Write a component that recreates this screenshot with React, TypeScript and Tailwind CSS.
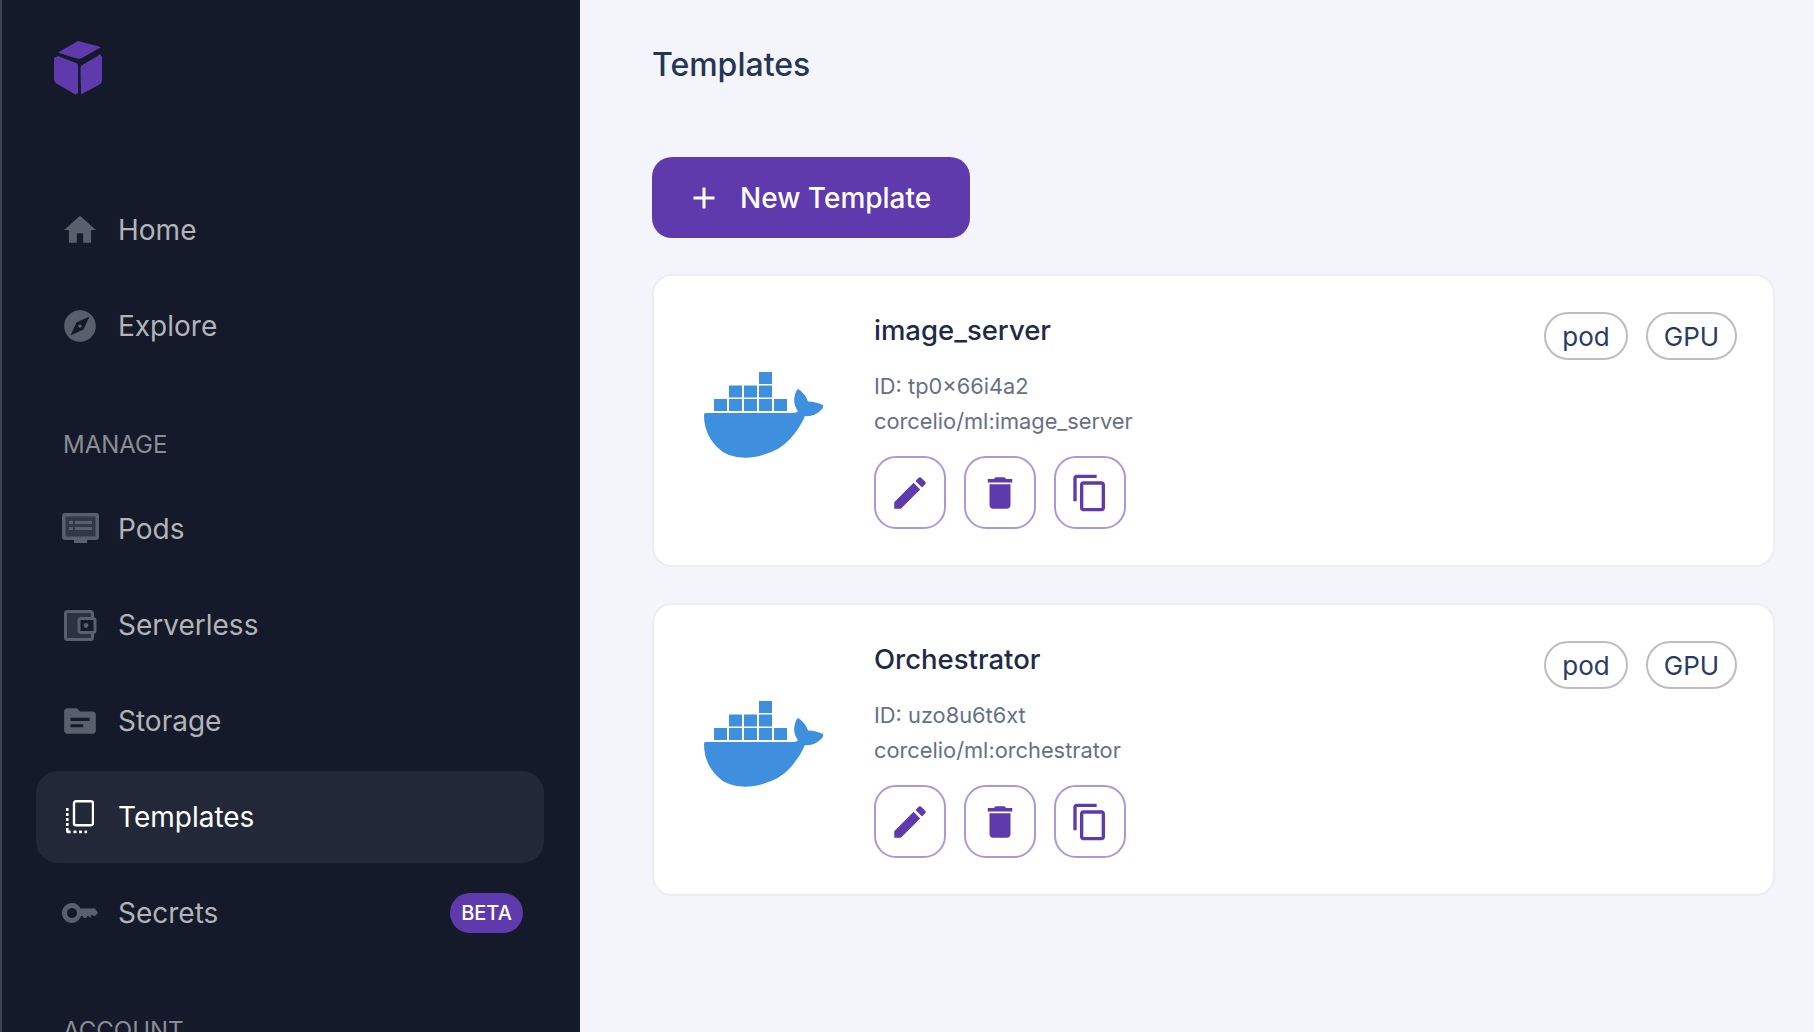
import React from 'react';
import { MdHome, MdExplore, MdTopic, MdEdit, MdDelete, MdContentCopy, MdAdd } from 'react-icons/md';

const CubeLogo = () => (
  <svg width="50" height="54" viewBox="0 0 50 54" fill="#5f3aad">
    <path d="M24 0 L45 5.5 L46.5 6.5 L28 17 Q25 18.5 21 17 L4 11.5 Z" />
    <path d="M0 17 L4 15 L22 22 Q24.5 23 24 26 L24 52 L21.5 53.5 L1.5 42 L0 39 Z" />
    <path d="M29 23.5 L42 16 L46 13 L48 16 L48 40 L46.5 43 L27 53.5 L26.5 27 Q26.5 24.5 29 23.5 Z" />
  </svg>
);

const PodsIcon = () => (
  <svg width="38" height="32" viewBox="0 0 38 32">
    <path d="M3 0 H35 Q37 0 37 3 V24 Q37 27 34 27 H25 V30 H12 V27 H3 Q0 27 0 24 V3 Q0 0 3 0 Z" fill="#5a5f6d" />
    <rect x="3.5" y="3.5" width="30" height="20" fill="#323747" />
    <rect x="7" y="8" width="4" height="3" fill="#5a5f6d" />
    <rect x="7" y="14" width="4" height="3" fill="#5a5f6d" />
    <rect x="13" y="8" width="17" height="3" fill="#5a5f6d" />
    <rect x="13" y="14" width="17" height="3" fill="#5a5f6d" />
  </svg>
);

const WalletIcon = () => (
  <svg width="33" height="31" viewBox="0 0 33 31">
    <rect x="1.5" y="1.5" width="27" height="28" rx="2" fill="#2d3242" stroke="#5a5f6d" strokeWidth="3" />
    <rect x="15" y="8.5" width="16" height="14" rx="2" fill="#141a29" stroke="#5a5f6d" strokeWidth="3" />
    <circle cx="22" cy="15.5" r="2.4" fill="#5a5f6d" />
  </svg>
);

const TemplatesIcon = () => (
  <svg width="28" height="34" viewBox="0 0 28 34" fill="#ffffff">
    <rect x="8" y="1.2" width="19" height="24" rx="2" fill="none" stroke="#ffffff" strokeWidth="2.4" />
    <rect x="0" y="8" width="2.6" height="3" />
    <rect x="0" y="13" width="2.6" height="3" />
    <rect x="0" y="18" width="2.6" height="3" />
    <rect x="0" y="23" width="2.6" height="3" />
    <path d="M0 28 H2.6 V30.6 H4.5 V33.2 H2 Q0 33.2 0 31 Z" />
    <rect x="7.5" y="30.6" width="3" height="2.6" />
    <rect x="13" y="30.6" width="3" height="2.6" />
    <rect x="18.5" y="30.6" width="2.6" height="2.6" />
  </svg>
);

const KeyIcon = () => (
  <svg width="36" height="20" viewBox="0 0 36 20" fill="#5a5f6d">
    <path fillRule="evenodd" d="M10 0 C14 0 17 2 18.4 5.5 H33 L36 10 L33 13 H31.5 L30 11.5 L28 15 L26 12.5 L24 15 H22 L20.5 13 H19 C17.5 17 14 20 10 20 C4.5 20 0 15.5 0 10 C0 4.5 4.5 0 10 0 Z M10 5 C7.2 5 5 7.2 5 10 C5 12.8 7.2 15 10 15 C12.8 15 15 12.8 15 10 C15 7.2 12.8 5 10 5 Z" />
  </svg>
);

const DockerLogo = () => (
  <svg width="121" height="87" viewBox="0 0 121 87" fill="#3e8fdd">
    <rect x="55" y="0" width="13" height="12" />
    <rect x="25" y="13.5" width="13" height="12" />
    <rect x="40" y="13.5" width="13" height="12" />
    <rect x="55" y="13.5" width="13" height="12" />
    <rect x="10" y="27" width="13" height="12" />
    <rect x="25" y="27" width="13" height="12" />
    <rect x="40" y="27" width="13" height="12" />
    <rect x="55" y="27" width="13" height="12" />
    <rect x="70" y="27" width="13" height="12" />
    <path d="M1.5 41 H88 Q92 41 94 39.5 Q89 32 90.5 25 Q91.5 19 94 17 Q101 21 104 29.5 Q110 29 119 33 Q120 36 116 39 Q110 45 101 44 Q96 56 86 67 Q73 82 46 85.5 Q24 87 13 75 Q0 62 0 43 Q0 41 1.5 41 Z" />
  </svg>
);

function NavItem({ icon, label, active, badge }: { icon: React.ReactNode; label: string; active?: boolean; badge?: string }) {
  return (
    <div className={`flex h-[92px] items-center rounded-[22px] pl-[25px] pr-[21px] ${active ? 'bg-[#222838] text-white' : 'text-[#b2b4ba]'}`}>
      <span className="flex w-[38px] justify-center">{icon}</span>
      <span className="ml-[19px] text-[28px] font-normal">{label}</span>
      {badge && (
        <span className="ml-auto flex h-10 w-[73px] items-center justify-center rounded-full bg-[#5f3aad] text-xl font-medium text-white">{badge}</span>
      )}
    </div>
  );
}

function TemplateCard({ name, id, image }: { name: string; id: string; image: string }) {
  return (
    <div className="flex h-[293px] rounded-[20px] border-2 border-[#eceef3] bg-white">
      <div className="ml-[50px] mt-[96px] w-[121px] shrink-0">
        <DockerLogo />
      </div>
      <div className="ml-[49px] pt-[34px]">
        <h2 className="text-[27.5px] leading-[40px] font-medium text-[#1e2a47]">{name}</h2>
        <p className="mt-[19px] text-[21.8px] leading-[35px] text-[#667085]">ID: {id}</p>
        <p className="text-[21.8px] leading-[35px] text-[#667085]">{image}</p>
        <div className="mt-[17px] flex gap-[18px]">
          <button className="flex h-[73px] w-[72px] items-center justify-center rounded-[22px] border-2 border-[#ae97d9] text-[#5f3aad]">
            <MdEdit size={42} />
          </button>
          <button className="flex h-[73px] w-[72px] items-center justify-center rounded-[22px] border-2 border-[#ae97d9] text-[#5f3aad]">
            <MdDelete size={42} />
          </button>
          <button className="flex h-[73px] w-[72px] items-center justify-center rounded-[22px] border-2 border-[#ae97d9] text-[#5f3aad]">
            <MdContentCopy size={40} />
          </button>
        </div>
      </div>
      <div className="ml-auto mr-[36px] mt-[36px] flex gap-[18px]">
        <span className="flex h-[48px] w-[84px] items-center justify-center rounded-full border-2 border-[#bdbdbd] text-[26px] text-[#2a3a62]">pod</span>
        <span className="flex h-[48px] w-[91px] items-center justify-center rounded-full border-2 border-[#bdbdbd] text-[26px] text-[#2a3a62]">GPU</span>
      </div>
    </div>
  );
}

export default function App() {
  return (
    <div className="flex h-[1032px] w-[1814px] overflow-hidden bg-[#f4f5fa] font-['Inter',sans-serif]">
      <aside className="h-full w-[580px] shrink-0 border-l-2 border-[#3d4350] bg-[#141a29]">
        <div className="pl-[52px] pt-[41px]">
          <CubeLogo />
        </div>
        <nav className="mt-[89px] pl-[34px] pr-[36px]">
          <div className="flex flex-col gap-1">
            <NavItem icon={<MdHome size={40} className="text-[#5a5f6d]" />} label="Home" />
            <NavItem icon={<MdExplore size={40} className="text-[#5a5f6d]" />} label="Explore" />
          </div>
          <div className="mt-[58px] mb-[23px] pl-[27px] text-[24px] leading-[30px] text-[#8a8d96]">MANAGE</div>
          <div className="flex flex-col gap-1">
            <NavItem icon={<span className="ml-[2px] block"><PodsIcon /></span>} label="Pods" />
            <NavItem icon={<span className="ml-[1px] block"><WalletIcon /></span>} label="Serverless" />
            <NavItem icon={<MdTopic size={40} className="text-[#5a5f6d]" />} label="Storage" />
            <NavItem icon={<TemplatesIcon />} label="Templates" active />
            <NavItem icon={<KeyIcon />} label="Secrets" badge="BETA" />
          </div>
          <div className="mt-[57px] pl-[27px] text-[24px] leading-[30px] text-[#8a8d96]">ACCOUNT</div>
        </nav>
      </aside>
      <main className="min-w-0 flex-1 pl-[72px] pr-[39px]">
        <h1 className="pt-[42px] text-[32px] leading-[46px] font-medium text-[#263555]">Templates</h1>
        <button className="mt-[69px] flex h-[81px] w-[318px] items-center rounded-[20px] bg-[#5f3aad] pl-[34px] text-[28px] font-medium text-white">
          <MdAdd size={36} />
          <span className="ml-[18px]">New Template</span>
        </button>
        <div className="mt-[36px] flex flex-col gap-[36px]">
          <TemplateCard name="image_server" id="tp0×66i4a2" image="corcelio/ml:image_server" />
          <TemplateCard name="Orchestrator" id="uzo8u6t6xt" image="corcelio/ml:orchestrator" />
        </div>
      </main>
    </div>
  );
}
